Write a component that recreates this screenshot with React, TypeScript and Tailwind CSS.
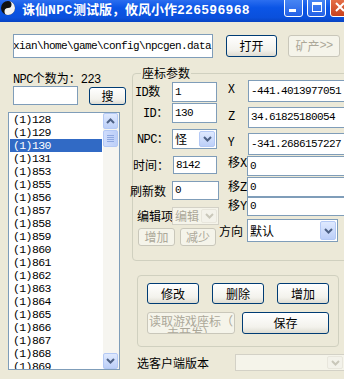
import React from 'react';

const cn = "font-['Noto_Sans_CJK_SC','Noto_Sans',sans-serif]";
const mono = "font-['Liberation_Mono','Noto_Sans_CJK_SC',monospace] tracking-[-0.6px]";

const listItems = [
  '128', '129', '130', '131', '853', '855', '856', '857', '858', '859',
  '860', '861', '862', '863', '864', '865', '866', '867', '868', '869',
];

function Chevron({ up, disabled }: { up?: boolean; disabled?: boolean }) {
  return (
    <svg width="9" height="6" viewBox="0 0 9 6">
      <path
        d={up ? 'M1 5 L4.5 1.5 L8 5' : 'M1 1 L4.5 4.5 L8 1'}
        fill="none"
        stroke={disabled ? '#c9c7ba' : '#4d6185'}
        strokeWidth="2"
      />
    </svg>
  );
}

function ArrowBox({ up, disabled, className = '' }: { up?: boolean; disabled?: boolean; className?: string }) {
  return (
    <div
      className={`flex items-center justify-center rounded-[2px] border ${
        disabled
          ? 'border-[#e8e6dc] bg-[#f3f2ea]'
          : 'border-[#b4c9f5] bg-[linear-gradient(180deg,#dfe9fe,#bccff8)]'
      } ${className}`}
    >
      <Chevron up={up} disabled={disabled} />
    </div>
  );
}

function Btn({ children, disabled, className = '' }: { children: React.ReactNode; disabled?: boolean; className?: string }) {
  return (
    <button
      type="button"
      className={`${cn} text-[12px] leading-[12px] rounded-[3px] border flex items-center justify-center shrink-0 ${
        disabled
          ? 'border-[#c9c7ba] bg-[#f5f4ea] text-[#aca899]'
          : 'border-[#003c74] bg-[linear-gradient(180deg,#ffffff,#f3f2ec_70%,#dedcd2)] text-black'
      } ${className}`}
    >
      {children}
    </button>
  );
}

function Field({ value, className = '' }: { value: string; className?: string }) {
  return (
    <div
      className={`border border-[#7f9db9] bg-white pl-[2px] flex items-center overflow-hidden whitespace-nowrap text-[11px] shrink-0 ${mono} ${className}`}
    >
      {value}
    </div>
  );
}

function Combo({ value, disabled, className = '' }: { value: string; disabled?: boolean; className?: string }) {
  return (
    <div
      className={`border flex items-stretch overflow-hidden shrink-0 ${
        disabled ? 'border-[#d3d1c6] bg-[#f5f4ea] text-[#aca899]' : 'border-[#7f9db9] bg-white text-black'
      } ${className}`}
    >
      <div className={`flex-1 min-w-0 pl-[2px] flex items-center text-[12px] whitespace-nowrap overflow-hidden ${cn}`}>{value}</div>
      <ArrowBox disabled={disabled} className="w-[16px] m-[1px] shrink-0" />
    </div>
  );
}

function TitleBar() {
  return (
    <div className="h-[22px] flex items-start bg-[linear-gradient(180deg,#2b6ef0,#0b55e6_35%,#0a50dc_80%,#0843c2)]">
      <svg width="16" height="16" viewBox="0 0 16 16" className="shrink-0">
        <circle cx="8" cy="8" r="7" fill="#111" />
        <path d="M8 1 A7 7 0 0 1 8 15 A3.5 3.5 0 0 1 8 8 A3.5 3.5 0 0 0 8 1" fill="#f2f2f2" />
        <circle cx="8" cy="4.5" r="1.2" fill="#111" />
        <circle cx="8" cy="11.5" r="1.2" fill="#f2f2f2" />
      </svg>
      <div className={`ml-[6px] mt-[1px] text-white font-bold text-[13px] leading-[16px] whitespace-nowrap ${cn}`}>
        诛仙<span className="font-['Liberation_Mono',monospace] tracking-[0.5px]">NPC</span>测试版，攸风小作
        <span className="font-['Liberation_Mono',monospace] tracking-[0.3px]">226596968</span>
      </div>
      <div className="ml-auto mr-[-5px] mt-[-4px] flex gap-[4px]">
        <div className="w-[19px] h-[21px] rounded-[3px] border border-white bg-[linear-gradient(180deg,#4d8cf6,#2461e6)] flex items-end pb-[4px] pl-[4px]">
          <div className="w-[7px] h-[3px] bg-white" />
        </div>
        <div className="w-[19px] h-[21px] rounded-[3px] border border-white bg-[linear-gradient(180deg,#4d8cf6,#2461e6)] flex items-center justify-center">
          <div className="w-[10px] h-[10px] border border-white border-t-[3px]" />
        </div>
        <div className="w-[19px] h-[21px] rounded-[3px] border border-white bg-[linear-gradient(180deg,#e9774f,#c9421d)] flex items-center justify-center">
          <svg width="10" height="10" viewBox="0 0 10 10">
            <path d="M1 1 L9 9 M9 1 L1 9" stroke="#fff" strokeWidth="2" />
          </svg>
        </div>
      </div>
    </div>
  );
}

function NpcList() {
  return (
    <div className="mt-[7px] h-[258px] border border-[#7f9db9] bg-white flex">
      <div className="flex-1 flex flex-col overflow-hidden">
        {listItems.map((n) => (
          <div
            key={n}
            className={`h-[13px] shrink-0 mx-[1px] pl-[3px] text-[11.5px] leading-[13px] ${mono} ${
              n === '130' ? 'bg-[#316ac5] text-white' : 'text-black'
            }`}
          >
            (1){n}
          </div>
        ))}
      </div>
      <div className="w-[16px] flex flex-col bg-[#f6f5f0]">
        <ArrowBox up className="h-[16px] w-[15px]" />
        <div className="mt-[1px] h-[17px] w-[15px] rounded-[2px] border border-[#b4c9f5] bg-[linear-gradient(90deg,#cfdcfc,#bccff8)] flex flex-col items-center justify-center gap-[1px]">
          <div className="w-[7px] h-[1px] bg-[#8ea8e0]" />
          <div className="w-[7px] h-[1px] bg-[#8ea8e0]" />
          <div className="w-[7px] h-[1px] bg-[#8ea8e0]" />
          <div className="w-[7px] h-[1px] bg-[#8ea8e0]" />
        </div>
        <div className="flex-1" />
        <ArrowBox className="h-[16px] w-[15px]" />
      </div>
    </div>
  );
}

function CoordGroup() {
  const label = `text-[12px] leading-[12px] whitespace-nowrap shrink-0 ${cn}`;
  return (
    <fieldset className="w-[230px] h-[194px] border border-[#d0d0bf] rounded-[4px]">
      <legend className={`ml-[8px] px-[1px] ${label}`}>座标参数</legend>
      <div className="flex">
        <div className="w-[95px] flex flex-col">
          <div className="mt-[3px] h-[20px] flex items-center">
            <div className={`w-[39px] pl-[2px] ${label}`}>
              <span className={mono}>ID</span>数
            </div>
            <Field value="1" className="w-[45px] h-[20px]" />
          </div>
          <div className="mt-[1px] h-[20px] flex items-center">
            <div className={`w-[39px] pl-[10px] ${label}`}>
              <span className={mono}>ID</span>：
            </div>
            <Field value="130" className="w-[45px] h-[20px]" />
          </div>
          <div className="mt-[6px] h-[20px] flex items-center">
            <div className={`w-[39px] pl-[4px] ${label}`}>
              <span className={mono}>NPC</span>：
            </div>
            <Combo value="怪" className="w-[45px] h-[20px]" />
          </div>
          <div className="mt-[7px] h-[18px] flex items-center">
            <div className={`w-[40px] ${label}`}>时间：</div>
            <Field value="8142" className="w-[44px] h-[18px]" />
          </div>
          <div className="mt-[7px] h-[19px] flex items-center">
            <div className={`ml-[-3px] w-[42px] ${label}`}>刷新数</div>
            <Field value="0" className="w-[47px] h-[19px]" />
          </div>
          <div className="mt-[7px] h-[18px] flex items-center">
            <div className={`w-[39px] pl-[4px] ${label}`}>编辑项</div>
            <Combo value="编辑1" disabled className="w-[47px] h-[18px]" />
          </div>
          <div className="mt-[3px] h-[18px] flex items-center">
            <Btn disabled className="ml-[5px] w-[37px] h-[18px]">增加</Btn>
            <Btn disabled className="ml-[5px] w-[36px] h-[18px]">减少</Btn>
          </div>
        </div>
        <div className="flex flex-col">
          <div className="mt-[1px] h-[22px] flex items-start">
            <div className={`w-[20px] pt-[2px] ${label} ${mono}`}>X</div>
            <Field value="-441.4013977051" className="w-[100px] h-[22px]" />
          </div>
          <div className="mt-[5px] h-[21px] flex items-start">
            <div className={`w-[20px] pt-[2px] ${label} ${mono}`}>Z</div>
            <Field value="34.61825180054" className="w-[100px] h-[21px]" />
          </div>
          <div className="mt-[5px] h-[22px] flex items-start">
            <div className={`w-[20px] pt-[2px] ${label} ${mono}`}>Y</div>
            <Field value="-341.2686157227" className="w-[100px] h-[22px]" />
          </div>
          <div className="mt-[1px] h-[20px] flex items-start">
            <div className={`w-[19px] ${label}`}>
              移<span className={mono}>X</span>
            </div>
            <Field value="0" className="w-[100px] h-[20px]" />
          </div>
          <div className="mt-[1px] h-[20px] flex items-center">
            <div className={`w-[19px] ${label}`}>
              移<span className={mono}>Z</span>
            </div>
            <Field value="0" className="w-[100px] h-[20px]" />
          </div>
          <div className="h-[19px] flex items-start">
            <div className={`w-[19px] pt-[2px] ${label}`}>
              移<span className={mono}>Y</span>
            </div>
            <Field value="0" className="w-[100px] h-[19px]" />
          </div>
          <div className="mt-[3px] h-[23px] flex items-center">
            <div className={`ml-[-9px] w-[28px] ${label}`}>方向</div>
            <Combo value="默认" className="w-[91px] h-[23px]" />
          </div>
        </div>
      </div>
    </fieldset>
  );
}

export default function App() {
  return (
    <div className={`w-[344px] h-[379px] overflow-hidden bg-[#ece9d8] flex flex-col text-black ${cn}`}>
      <TitleBar />

      <div className="mt-[12px] h-[24px] flex items-start">
        <div
          className={`ml-[13px] w-[200px] h-[24px] border border-[#7f9db9] bg-white pr-[1px] flex items-center justify-end overflow-hidden whitespace-nowrap text-[11px] ${mono}`}
        >
          D:\zhuxian\home\game\config\npcgen.data
        </div>
        <Btn className="ml-[13px] mt-[1px] w-[51px] h-[22px]">打开</Btn>
        <Btn disabled className="ml-[11px] mt-[1px] w-[52px] h-[22px] whitespace-nowrap">
          矿产<span className={mono}>&gt;&gt;</span>
        </Btn>
      </div>

      <div className="mt-[9px] flex items-start">
        <div className="ml-[8px] w-[112px] flex flex-col shrink-0">
          <div className="ml-[5px] mt-[4px] h-[13px] leading-[13px] text-[12px] whitespace-nowrap">
            <span className={mono}>NPC</span>个数为：<span className={mono}>223</span>
          </div>
          <div className="mt-[2px] flex items-start">
            <Field value="" className="ml-[5px] w-[65px] h-[19px]" />
            <Btn className="ml-[11px] mt-[1px] w-[37px] h-[18px]">搜</Btn>
          </div>
          <NpcList />
        </div>

        <div className="ml-[12px] flex flex-col shrink-0">
          <CoordGroup />

          <div className="mt-[14px] ml-[5px] w-[202px] h-[72px] border border-[#d0d0bf] rounded-[4px] flex flex-col">
            <div className="mt-[7px] pl-[9px] flex gap-[13px]">
              <Btn className="w-[52px] h-[21px]">修改</Btn>
              <Btn className="w-[52px] h-[21px]">删除</Btn>
              <Btn className="w-[52px] h-[21px]">增加</Btn>
            </div>
            <div className="mt-[8px] pl-[9px] flex">
              <Btn disabled className="w-[88px] h-[22px] overflow-hidden !items-start pt-[2px]">
                <span className="flex flex-col items-center whitespace-nowrap">
                  <span>读取游戏座标（</span>
                  <span>未开发）</span>
                </span>
              </Btn>
              <Btn className="ml-[7px] w-[87px] h-[22px]">保存</Btn>
            </div>
          </div>

          <div className="mt-[7px] h-[17px] flex items-center">
            <div className="ml-[5px] w-[98px] text-[12px] leading-[12px] whitespace-nowrap shrink-0">选客户端版本</div>
            <Combo value="" disabled className="w-[110px] h-[17px]" />
          </div>
        </div>
      </div>
    </div>
  );
}
